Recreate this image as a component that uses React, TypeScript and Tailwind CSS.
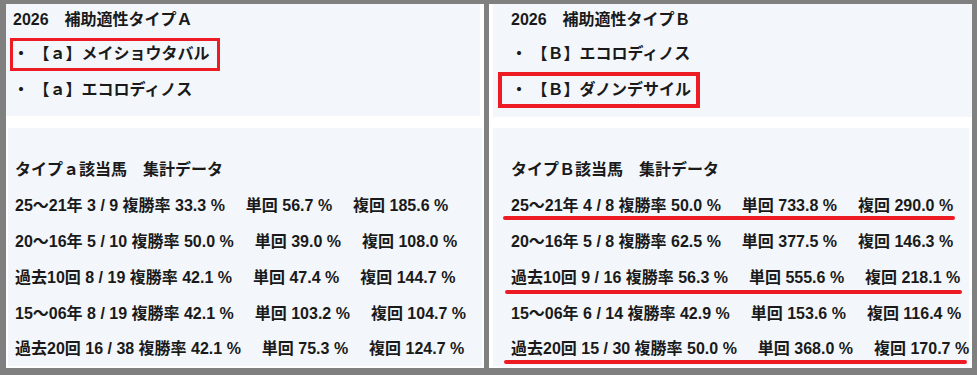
import React from 'react';

const font = { fontFamily: '"Liberation Sans", "Noto Sans CJK JP", sans-serif' };
const sp = '\u00A0\u00A0\u00A0\u00A0\u2009';

type Row = { label: string; mark?: { left: number; width: number; top: number } };

const rowsA: Row[] = [
  { label: `25～21年 3 / 9 複勝率 33.3 %${sp}単回 56.7 %${sp}複回 185.6 %` },
  { label: `20～16年 5 / 10 複勝率 50.0 %${sp}単回 39.0 %${sp}複回 108.0 %` },
  { label: `過去10回 8 / 19 複勝率 42.1 %${sp}単回 47.4 %${sp}複回 144.7 %` },
  { label: `15～06年 8 / 19 複勝率 42.1 %${sp}単回 103.2 %${sp}複回 104.7 %` },
  { label: `過去20回 16 / 38 複勝率 42.1 %${sp}単回 75.3 %${sp}複回 124.7 %` },
];

const rowsB: Row[] = [
  { label: `25～21年 4 / 8 複勝率 50.0 %${sp}単回 733.8 %${sp}複回 290.0 %`, mark: { left: -8, width: 452, top: 28 } },
  { label: `20～16年 5 / 8 複勝率 62.5 %${sp}単回 377.5 %${sp}複回 146.3 %` },
  { label: `過去10回 9 / 16 複勝率 56.3 %${sp}単回 555.6 %${sp}複回 218.1 %`, mark: { left: -6, width: 457, top: 30 } },
  { label: `15～06年 6 / 14 複勝率 42.9 %${sp}単回 153.6 %${sp}複回 116.4 %` },
  { label: `過去20回 15 / 30 複勝率 50.0 %${sp}単回 368.0 %${sp}複回 170.7 %`, mark: { left: -7, width: 463, top: 28 } },
];

function DataRows({ rows }: { rows: Row[] }) {
  return (
    <>
      {rows.map((r, i) => (
        <div
          key={i}
          className={`relative flex items-center whitespace-nowrap ${i === rows.length - 1 ? 'h-[34px]' : 'h-[36px]'}`}
        >
          {r.label}
          {r.mark && (
            <span
              className="absolute h-[4px] rounded-full bg-[#ed1c24]"
              style={{ left: r.mark.left, width: r.mark.width, top: r.mark.top }}
            />
          )}
        </div>
      ))}
    </>
  );
}

export default function App() {
  return (
    <div
      className="flex h-[375px] w-[977px] gap-[5px] bg-[#808080] pb-[7px] pl-[6px] pr-[5px] pt-[4px] text-[16px] font-bold text-[#1a1a1a]"
      style={font}
    >
      {/* タイプA */}
      <div className="flex w-[478px] flex-col bg-white">
        <div className="mr-[4px] h-[112px] bg-[#f3f7fb] pl-[7px]">
          <div className="flex h-[32px] items-center">2026　補助適性タイプＡ</div>
          <div className="flex h-[36px] items-center">
            <div className="-ml-[3px] flex h-[33px] items-center whitespace-pre border-[3px] border-[#ed1c24] pr-[8px]">
              ・ 【ａ】メイショウタバル
            </div>
          </div>
          <div className="flex h-[36px] items-center whitespace-pre">・ 【ａ】エコロディノス</div>
        </div>
        <div className="ml-[2px] mr-[2px] mt-[12px] h-[238px] bg-[#f3f7fb] pl-[7px] pt-[24px]">
          <div className="flex h-[36px] items-center">タイプａ該当馬　集計データ</div>
          <DataRows rows={rowsA} />
        </div>
      </div>

      {/* タイプB */}
      <div className="flex w-[483px] flex-col bg-white">
        <div className="ml-[4px] h-[113px] bg-[#f3f7fb] pl-[18px]">
          <div className="flex h-[32px] items-center">2026　補助適性タイプＢ</div>
          <div className="flex h-[36px] items-center whitespace-pre">・ 【Ｂ】エコロディノス</div>
          <div className="flex h-[36px] items-center">
            <div className="-ml-[13px] flex h-[36px] items-center whitespace-pre border-4 border-[#ed1c24] pl-[9px] pr-[5px]">
              ・ 【Ｂ】ダノンデサイル
            </div>
          </div>
        </div>
        <div className="ml-[4px] mr-[3px] mt-[11px] h-[238px] bg-[#f3f7fb] pl-[18px] pt-[24px]">
          <div className="flex h-[36px] items-center">タイプＢ該当馬　集計データ</div>
          <DataRows rows={rowsB} />
        </div>
      </div>
    </div>
  );
}
